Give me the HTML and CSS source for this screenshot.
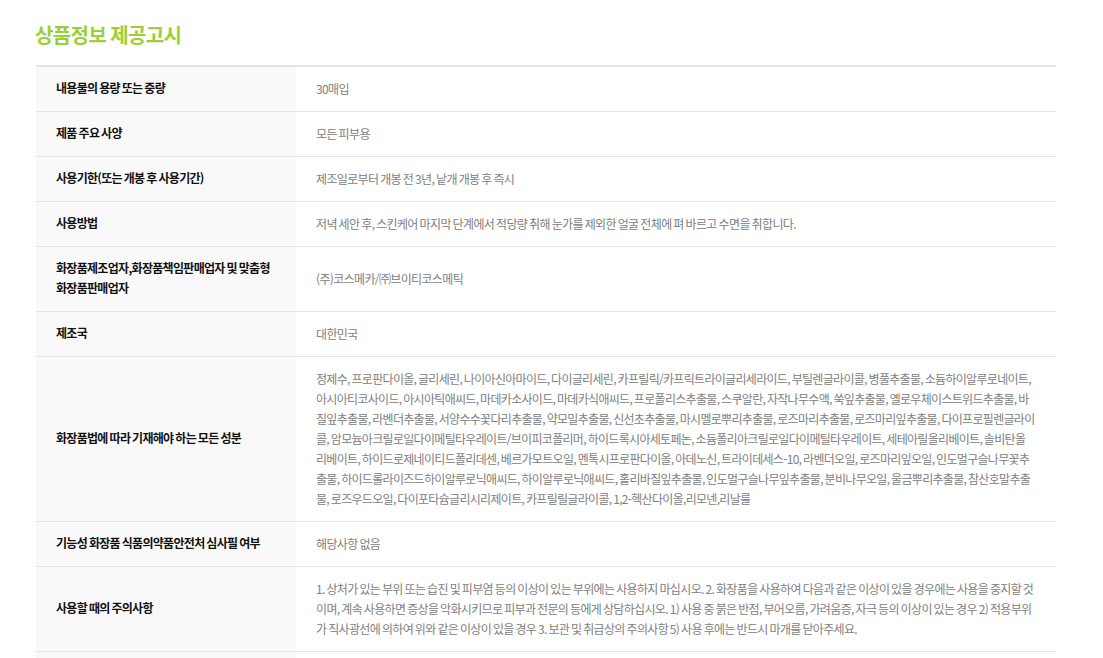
FILE: index.html
```html
<!DOCTYPE html>
<html lang="ko">
<head>
<meta charset="utf-8">
<title>상품정보 제공고시</title>
<link rel="stylesheet" href="styles.css">
</head>
<body>
<main class="page">
<h2 class="title">상품정보 제공고시</h2>
<table class="info">
<tbody>
<tr><th>내용물의 용량 또는 중량</th><td>30매입</td></tr>
<tr><th>제품 주요 사양</th><td>모든 피부용</td></tr>
<tr><th>사용기한(또는 개봉 후 사용기간)</th><td>제조일로부터 개봉 전 3년, 낱개 개봉 후 즉시</td></tr>
<tr><th>사용방법</th><td>저녁 세안 후, 스킨케어 마지막 단계에서 적당량 취해 눈가를 제외한 얼굴 전체에 펴 바르고 수면을 취합니다.</td></tr>
<tr><th>화장품제조업자,화장품책임판매업자 및 맞춤형<br>화장품판매업자</th><td>(주)코스메카/㈜브이티코스메틱</td></tr>
<tr><th>제조국</th><td>대한민국</td></tr>
<tr><th>화장품법에 따라 기재해야 하는 모든 성분</th><td class="ingredients">정제수, 프로판다이올, 글리세린, 나이아신아마이드, 다이글리세린, 카프릴릭/카프릭트라이글리세라이드, 부틸렌글라이콜, 병풀추출물, 소듐하이알루로네이트,<br>아시아티코사이드, 아시아틱애씨드, 마데카소사이드, 마데카식애씨드, 프로폴리스추출물, 스쿠알란, 자작나무수액, 쑥잎추출물, 옐로우체이스트위드추출물, 바<br>질잎추출물, 라벤더추출물, 서양수수꽃다리추출물, 약모밀추출물, 신선초추출물, 마시멜로뿌리추출물, 로즈마리추출물, 로즈마리잎추출물, 다이프로필렌글라이<br>콜, 암모늄아크릴로일다이메틸타우레이트/브이피코폴리머, 하이드록시아세토페논, 소듐폴리아크릴로일다이메틸타우레이트, 세테아릴올리베이트, 솔비탄올<br>리베이트, 하이드로제네이티드폴리데센, 베르가모트오일, 멘톡시프로판다이올, 아데노신, 트라이데세스-10, 라벤더오일, 로즈마리잎오일, 인도멀구슬나무꽃추<br>출물, 하이드롤라이즈드하이알루로닉애씨드, 하이알루로닉애씨드, 홀리바질잎추출물, 인도멀구슬나무잎추출물, 분비나무오일, 울금뿌리추출물, 참산호말추출<br>물, 로즈우드오일, 다이포타슘글리시리제이트, 카프릴릴글라이콜, 1,2-헥산다이올,리모넨,리날룰</td></tr>
<tr><th>기능성 화장품 식품의약품안전처 심사필 여부</th><td>해당사항 없음</td></tr>
<tr><th>사용할 때의 주의사항</th><td class="caution">1. 상처가 있는 부위 또는 습진 및 피부염 등의 이상이 있는 부위에는 사용하지 마십시오. 2. 화장품을 사용하여 다음과 같은 이상이 있을 경우에는 사용을 중지할 것<br>이며, 계속 사용하면 증상을 악화시키므로 피부과 전문의 등에게 상담하십시오. 1) 사용 중 붉은 반점, 부어오름, 가려움증, 자극 등의 이상이 있는 경우 2) 적용부위<br>가 직사광선에 의하여 위와 같은 이상이 있을 경우 3. 보관 및 취급상의 주의사항 5) 사용 후에는 반드시 마개를 닫아주세요.</td></tr>
<tr><th></th><td></td></tr>
</tbody>
</table>
</main>
</body>
</html>
```
FILE: styles.css
```css
html, body {
  margin: 0;
  padding: 0;
  background: #fff;
}
body {
  height: 658px;
  overflow: hidden;
  font-family: "Noto Sans CJK KR", "Noto Sans", sans-serif;
}
.page {
  padding: 0 47px 0 36px;
}
.title {
  margin: 0 0 0 -1px;
  padding: 19px 0 15px;
  font-size: 20px;
  line-height: 31px;
  font-weight: 700;
  letter-spacing: -0.6px;
  word-spacing: -1px;
  color: #9bcf35;
}
.info {
  width: 1020px;
  border-collapse: collapse;
  table-layout: fixed;
  border-top: 2px solid #e5e5e5;
}
.info th,
.info td {
  padding: 12px 20px;
  height: 20px;
  border-bottom: 1px solid #e5e5e5;
  font-size: 12px;
  line-height: 20px;
  text-align: left;
  vertical-align: middle;
  white-space: nowrap;
}
.info th {
  width: 220px;
  padding-top: 11px;
  padding-bottom: 13px;
  background: #f9f9f9;
  font-weight: 700;
  letter-spacing: -0.7px;
  word-spacing: -0.8px;
  color: #111;
}
.info td {
  font-weight: 400;
  letter-spacing: -0.64px;
  word-spacing: -0.9px;
  color: #808080;
}
.info .ingredients {
  letter-spacing: -0.69px;
}
.info .caution {
  letter-spacing: -0.66px;
}
```
